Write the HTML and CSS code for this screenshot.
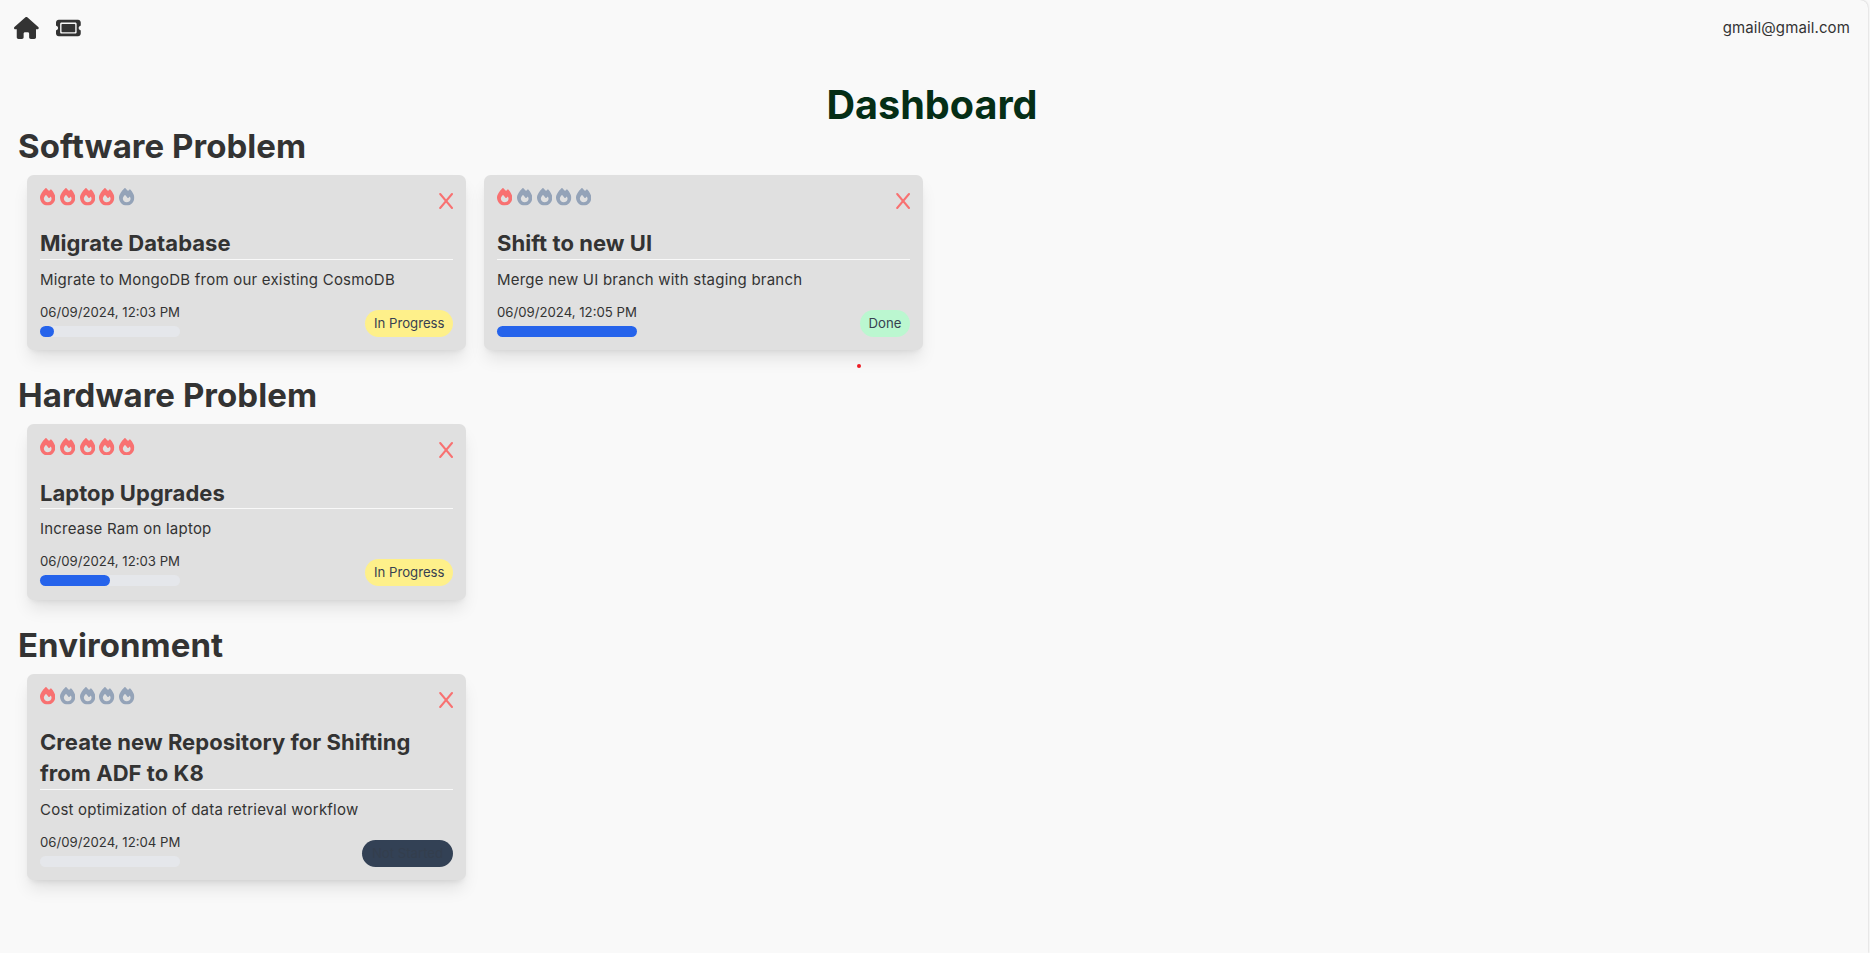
FILE: index.html
```html
<!DOCTYPE html>
<html lang="en">
<head>
<meta charset="utf-8">
<title>Dashboard</title>
<link rel="stylesheet" href="styles.css">
</head>
<body>
<svg class="sprite" aria-hidden="true">
<symbol id="fire" viewBox="0 0 448 512"><path d="M159.3 5.4c7.8-7.3 19.9-7.2 27.7 .1c27.6 25.9 53.5 53.8 77.7 84c11-14.4 23.5-30.1 37-42.9c7.9-7.4 20.1-7.4 28 .1c34.6 33 63.9 76.6 84.5 118c20.3 40.8 33.8 82.5 33.8 111.9C448 404.2 348.2 512 224 512C98.4 512 0 404.1 0 276.5c0-38.4 17.8-85.3 45.4-131.7C73.3 97.7 112.7 48.6 159.3 5.4zM225.7 416c25.3 0 47.7-7 68.8-21c42.1-29.4 53.4-88.2 28.1-134.4c-4.5-9-16-9.6-22.5-2l-25.2 29.3c-6.6 7.6-18.5 7.4-24.7-.5c-16.5-21-46-58.5-62.8-79.8c-6.3-8-18.3-8.1-24.7-.1c-33.8 42.5-50.8 69.3-50.8 99.4C112 375.4 162.6 416 225.7 416z"/></symbol>
<symbol id="close" viewBox="0 0 14 16"><path d="M1.2 1L13 15M13 1L1.2 15" fill="none" stroke="currentColor" stroke-width="2" stroke-linecap="round"/></symbol>
</svg>
<div class="page">
<nav class="nav">
<div class="links">
<svg class="nav-icon" viewBox="0 0 576 512"><path d="M575.8 255.5c0 18-15 32.1-32 32.1h-32l.7 160.2c0 2.7-.2 5.4-.5 8.1V472c0 22.1-17.9 40-40 40H456c-1.1 0-2.2 0-3.3-.1c-1.4 .1-2.8 .1-4.2 .1H416 392c-22.1 0-40-17.9-40-40V448 384c0-17.7-14.3-32-32-32H256c-17.7 0-32 14.3-32 32v64 24c0 22.1-17.9 40-40 40H160 128.1c-1.5 0-3-.1-4.5-.2c-1.2 .1-2.4 .2-3.6 .2H104c-22.1 0-40-17.9-40-40V360c0-.9 0-1.9 .1-2.8V287.6H32c-18 0-32-14-32-32.1c0-9 3-17 10-24L266.4 8c7-7 15-8 22-8s15 2 21 7L564.8 231.5c8 7 12 15 11 24z"/></svg>
<svg class="nav-icon" viewBox="0 0 576 512"><path d="M64 64C28.7 64 0 92.7 0 128v64c0 8.8 7.4 15.7 15.7 18.6C34.5 217.1 48 235 48 256s-13.5 38.9-32.3 45.4C7.4 304.3 0 311.2 0 320v64c0 35.3 28.7 64 64 64H512c35.3 0 64-28.7 64-64V320c0-8.8-7.4-15.7-15.7-18.6C541.5 294.9 528 277 528 256s13.5-38.9 32.3-45.4c8.3-2.9 15.7-9.8 15.7-18.6V128c0-35.3-28.7-64-64-64H64zm64 112l0 160c0 8.8 7.2 16 16 16H432c8.8 0 16-7.2 16-16V176c0-8.8-7.2-16-16-16H144c-8.8 0-16 7.2-16 16zM96 160c0-17.7 14.3-32 32-32H448c17.7 0 32 14.3 32 32V352c0 17.7-14.3 32-32 32H128c-17.7 0-32-14.3-32-32V160z"/></svg>
</div>
<p class="email">gmail@gmail.com</p>
</nav>
<main class="main">
<h1 class="heading">Dashboard</h1>
<section class="group">
<h2 class="category">Software Problem</h2>
<div class="cards">
<article class="card">
<div class="top"><div class="fires"><svg class="fire hot"><use href="#fire"/></svg><svg class="fire hot"><use href="#fire"/></svg><svg class="fire hot"><use href="#fire"/></svg><svg class="fire hot"><use href="#fire"/></svg><svg class="fire"><use href="#fire"/></svg></div><svg class="close"><use href="#close"/></svg></div>
<h3 class="title">Migrate Database</h3><hr class="rule">
<p class="desc">Migrate to MongoDB from our existing CosmoDB</p>
<div class="foot"><div class="meta"><p class="date">06/09/2024, 12:03 PM</p><div class="track"><div class="bar" style="width:10%"></div></div></div><span class="pill progress">In Progress</span></div>
</article>
<article class="card">
<div class="top"><div class="fires"><svg class="fire hot"><use href="#fire"/></svg><svg class="fire"><use href="#fire"/></svg><svg class="fire"><use href="#fire"/></svg><svg class="fire"><use href="#fire"/></svg><svg class="fire"><use href="#fire"/></svg></div><svg class="close"><use href="#close"/></svg></div>
<h3 class="title">Shift to new UI</h3><hr class="rule">
<p class="desc">Merge new UI branch with staging branch</p>
<div class="foot"><div class="meta"><p class="date">06/09/2024, 12:05 PM</p><div class="track"><div class="bar" style="width:100%"></div></div></div><span class="pill done">Done</span></div>
</article>
</div>
</section>
<section class="group">
<h2 class="category">Hardware Problem</h2>
<div class="cards">
<article class="card">
<div class="top"><div class="fires"><svg class="fire hot"><use href="#fire"/></svg><svg class="fire hot"><use href="#fire"/></svg><svg class="fire hot"><use href="#fire"/></svg><svg class="fire hot"><use href="#fire"/></svg><svg class="fire hot"><use href="#fire"/></svg></div><svg class="close"><use href="#close"/></svg></div>
<h3 class="title">Laptop Upgrades</h3><hr class="rule">
<p class="desc">Increase Ram on laptop</p>
<div class="foot"><div class="meta"><p class="date">06/09/2024, 12:03 PM</p><div class="track"><div class="bar" style="width:50%"></div></div></div><span class="pill progress">In Progress</span></div>
</article>
</div>
</section>
<section class="group">
<h2 class="category">Environment</h2>
<div class="cards">
<article class="card">
<div class="top"><div class="fires"><svg class="fire hot"><use href="#fire"/></svg><svg class="fire"><use href="#fire"/></svg><svg class="fire"><use href="#fire"/></svg><svg class="fire"><use href="#fire"/></svg><svg class="fire"><use href="#fire"/></svg></div><svg class="close"><use href="#close"/></svg></div>
<h3 class="title">Create new Repository for Shifting from ADF to K8</h3><hr class="rule">
<p class="desc">Cost optimization of data retrieval workflow</p>
<div class="foot"><div class="meta"><p class="date">06/09/2024, 12:04 PM</p><div class="track"></div></div><span class="pill idle">Not Started</span></div>
</article>
</div>
</section>
</main>
<span class="dot"></span>
</div>
</body>
</html>
```
FILE: styles.css
```css
* { box-sizing: border-box; }
body { margin: 0; background: #f9f9f9; color: #333; font-family: Inter, sans-serif; height: 953px; overflow: hidden; }
h1, h2, h3, p { margin: 0; }
.sprite { position: absolute; width: 0; height: 0; }
.page { position: relative; width: 1868px; height: 953px; background: #f9f9f9; border-radius: 0 8px 0 0; box-shadow: 0 0 2px rgba(0,0,0,.25); }
.nav { display: flex; justify-content: space-between; align-items: center; height: 56px; padding: 0 18px 0 14px; }
.links { display: flex; gap: 17.5px; }
.nav-icon { width: 24.75px; height: 22px; fill: #333; }
.email { font-size: 15px; line-height: 22px; letter-spacing: .12px; }
.main { padding: 29px 18px 0; }
.heading { width: 1828px; text-align: center; font-size: 39.6px; line-height: 40px; color: #052e16; height: 42px; }
.group { margin-bottom: 17.1px; }
.category { font-size: 33px; line-height: 39.4px; letter-spacing: .05px; }
.cards { display: flex; }
.card { width: 439.4px; margin: 8.8px; padding: 13.2px; border-radius: 6.6px; background: #e0e0e0; box-shadow: 0 11px 16.5px -3.3px rgba(0,0,0,.1), 0 4.4px 6.6px -4.4px rgba(0,0,0,.1); }
.top { display: flex; justify-content: space-between; height: 40px; }
.fires { display: flex; gap: 4.4px; }
.fire { width: 15.4px; height: 17.6px; fill: #94a3b8; }
.hot { fill: #f87171; }
.close { width: 14px; height: 16px; margin-top: 4.8px; color: #f87171; }
.title { font-size: 22px; line-height: 30.8px; letter-spacing: .05px; }
.rule { margin: 0; border: 0; height: 1px; background: #f9f9f9; }
.desc { margin-top: 8px; font-size: 15px; line-height: 24px; letter-spacing: .22px; }
.foot { display: flex; justify-content: space-between; align-items: flex-end; height: 45px; }
.meta { width: 140px; }
.date { font-size: 13.2px; line-height: 17.6px; margin-bottom: 4.4px; white-space: nowrap; }
.track { height: 11px; border-radius: 6px; background: #e5e7eb; }
.bar { height: 11px; border-radius: 6px; background: #2563eb; }
.pill { padding: 0 8.5px 0 9px; border-radius: 14px; font-size: 13.2px; line-height: 27px; color: #374151; }
.progress { background: #fef08a; }
.done { background: #bbf7d0; }
.idle { padding: 0 9.9px; background: #334155; color: #333e4d; }
.dot { position: absolute; left: 856.6px; top: 364.3px; width: 4px; height: 4px; border-radius: 50%; background: #ed1c24; }
```
